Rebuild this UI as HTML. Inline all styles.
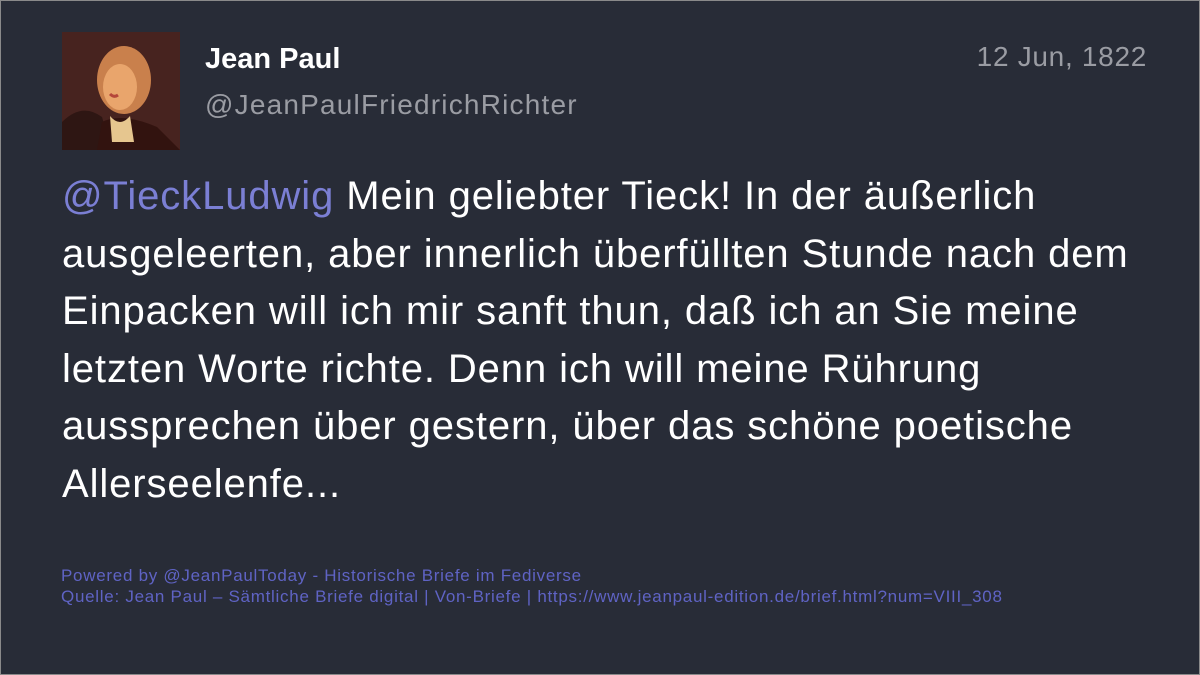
<!DOCTYPE html>
<html><head><meta charset="utf-8"><style>
html,body{margin:0;padding:0}
body{width:1200px;height:675px;background:#282c37;font-family:"Liberation Sans",sans-serif;position:relative;overflow:hidden;box-sizing:border-box;border:1px solid #8a8a8a}
.av{position:absolute;left:61px;top:31px;width:118px;height:118px;background:#47231f;overflow:hidden}
.name{position:absolute;left:204px;top:42px;color:#fff;font-weight:bold;font-size:29px}
.handle{position:absolute;left:204px;top:88px;color:#9a9ca3;font-size:28px;letter-spacing:1.2px}
.date{position:absolute;right:52px;top:40px;color:#9a9ca3;font-size:28px;letter-spacing:0.7px}
.body{position:absolute;left:61px;top:167px;color:#fff;font-size:40px;line-height:57.5px;letter-spacing:0.9px;white-space:nowrap}
.m{color:#7b7fd4}
.foot{position:absolute;left:60px;top:564px;color:#5f63c4;font-size:17px;line-height:21px;letter-spacing:0.72px;white-space:nowrap}
</style></head><body>
<div class="av"><svg width="118" height="118" viewBox="0 0 118 118">
<rect width="118" height="118" fill="#47231f"/>
<path d="M0 90 Q20 70 40 85 L50 118 L0 118Z" fill="#2e1613"/>
<path d="M35 118 L40 90 Q60 80 95 95 L118 118Z" fill="#32130f"/>
<ellipse cx="62" cy="48" rx="27" ry="34" fill="#c9804c"/>
<ellipse cx="58" cy="55" rx="17" ry="23" fill="#e9a56c"/>
<path d="M48 84 Q58 96 68 84 L72 110 L50 110Z" fill="#e6c68f"/>
<path d="M48 62 Q52 66 56 63" stroke="#b5463a" stroke-width="3" fill="none"/>
</svg></div>
<div class="name">Jean Paul</div>
<div class="handle">@JeanPaulFriedrichRichter</div>
<div class="date">12 Jun, 1822</div>
<div class="body"><span class="m">@TieckLudwig</span> Mein geliebter Tieck! In der äußerlich<br>ausgeleerten, aber innerlich überfüllten Stunde nach dem<br>Einpacken will ich mir sanft thun, daß ich an Sie meine<br>letzten Worte richte. Denn ich will meine Rührung<br>aussprechen über gestern, über das schöne poetische<br>Allerseelenfe...</div>
<div class="foot">Powered by @JeanPaulToday - Historische Briefe im Fediverse<br>Quelle: Jean Paul – Sämtliche Briefe digital | Von-Briefe | https://www.jeanpaul-edition.de/brief.html?num=VIII_308</div>
</body></html>
